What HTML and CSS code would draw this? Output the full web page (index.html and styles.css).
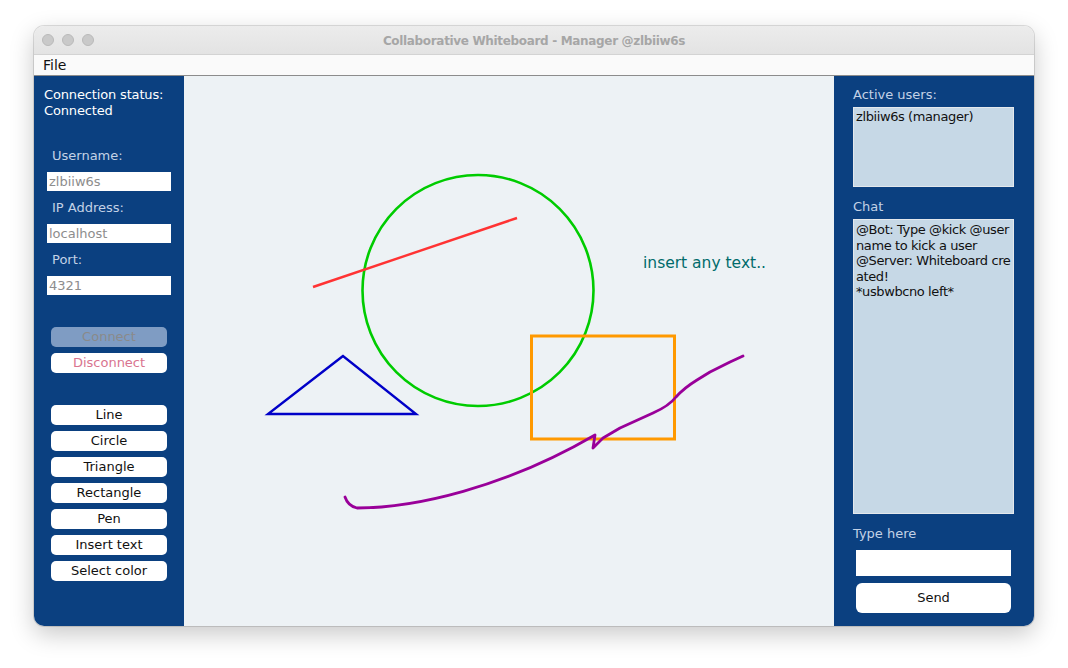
FILE: index.html
```html
<!DOCTYPE html>
<html>
<head>
<meta charset="utf-8">
<title>Collaborative Whiteboard</title>
<link rel="stylesheet" href="styles.css">
</head>
<body>
<div class="window">
  <div class="titlebar">
    <div class="lights"><span class="light"></span><span class="light"></span><span class="light"></span></div>
    <div class="title">Collaborative Whiteboard - Manager @zlbiiw6s</div>
  </div>
  <div class="menubar"><span class="menu-item">File</span></div>
  <div class="main">
    <aside class="left">
      <div class="status">Connection status:<br>Connected</div>
      <div class="field">
        <div class="label">Username:</div>
        <div class="input">zlbiiw6s</div>
      </div>
      <div class="field">
        <div class="label">IP Address:</div>
        <div class="input">localhost</div>
      </div>
      <div class="field">
        <div class="label">Port:</div>
        <div class="input">4321</div>
      </div>
      <div class="btn-group conn">
        <div class="btn disabled">Connect</div>
        <div class="btn danger">Disconnect</div>
      </div>
      <div class="btn-group tools">
        <div class="btn">Line</div>
        <div class="btn">Circle</div>
        <div class="btn">Triangle</div>
        <div class="btn">Rectangle</div>
        <div class="btn">Pen</div>
        <div class="btn">Insert text</div>
        <div class="btn">Select color</div>
      </div>
    </aside>
    <section class="canvas">
      <svg class="drawing" width="650" height="550" viewBox="0 0 650 550">
        <circle cx="294" cy="214.5" r="115.5" fill="none" stroke="#00cc00" stroke-width="2.6"/>
        <line x1="129" y1="211" x2="333" y2="142" stroke="#ff3333" stroke-width="2.4"/>
        <polygon points="159,280 84,338 232,338" fill="none" stroke="#0000c8" stroke-width="2.4"/>
        <rect x="347.5" y="260" width="143" height="103" fill="none" stroke="#ff9900" stroke-width="3"/>
        <path d="M161,421 Q164,430 173,432 C230,432 320,412 411,359 L409,372 L419,362 L436,352 L469,337 Q485,330 492,321 Q500,312 513,304 L526,296 L546,286 L559,280" fill="none" stroke="#990099" stroke-width="2.8" stroke-linejoin="round" stroke-linecap="round"/>
      </svg>
      <div class="canvas-text">insert any text..</div>
    </section>
    <aside class="right">
      <div class="rlabel">Active users:</div>
      <div class="box users">zlbiiw6s (manager)</div>
      <div class="rlabel">Chat</div>
      <div class="box chat">
        <div>@Bot: Type @kick @user</div>
        <div>name to kick a user</div>
        <div>@Server: Whiteboard cre</div>
        <div>ated!</div>
        <div>*usbwbcno left*</div>
      </div>
      <div class="rlabel">Type here</div>
      <div class="chat-input"></div>
      <div class="btn send">Send</div>
    </aside>
  </div>
</div>
</body>
</html>
```

FILE: styles.css
```css
* { box-sizing: border-box; }
html, body { margin: 0; padding: 0; }
body {
  background: #ffffff;
  font-family: "DejaVu Sans", "Liberation Sans", sans-serif;
  font-size: 13px;
  width: 1068px;
  height: 668px;
  overflow: hidden;
  padding: 26px 0 0 34px;
}
.window {
  width: 1000px;
  height: 600px;
  border-radius: 10px;
  overflow: hidden;
  box-shadow: 0 0 0 1px rgba(0,0,0,0.12), 0 8px 24px rgba(0,0,0,0.22);
  display: flex;
  flex-direction: column;
}
.titlebar {
  height: 29px;
  background: linear-gradient(#ececec, #e3e3e3);
  border-bottom: 1px solid #d3d3d3;
  position: relative;
  display: flex;
  align-items: center;
  justify-content: center;
}
.lights {
  position: absolute;
  left: 8px;
  top: 8px;
  display: flex;
  gap: 8px;
}
.light {
  width: 12px;
  height: 12px;
  border-radius: 50%;
  background: #c9c9c9;
  border: 1px solid #b9b9b9;
}
.title {
  font-weight: bold;
  font-size: 12px;
  letter-spacing: -0.33px;
  color: #a6a6a6;
  margin-top: 1px;
}
.menubar {
  height: 21px;
  background: #fafafa;
  border-bottom: 1px solid #8c8c8c;
  padding-left: 9px;
  display: flex;
  align-items: center;
}
.menu-item { font-size: 14px; color: #111; }
.main {
  flex: 1;
  display: flex;
  min-height: 0;
}
.left {
  width: 150px;
  background: #0b4080;
  padding-top: 11px;
  display: flex;
  flex-direction: column;
}
.status {
  color: #ffffff;
  line-height: 15.5px;
  padding-left: 10px;
  height: 31px;
  letter-spacing: -0.15px;
}
.field { display: flex; flex-direction: column; }
.status + .field { margin-top: 30px; }
.label {
  color: #c3d2e6;
  height: 15px;
  line-height: 15px;
  padding-left: 18px;
  margin-bottom: 9px;
}
.input {
  margin-left: 13px;
  width: 124px;
  height: 19px;
  background: #ffffff;
  color: #8d8d8d;
  line-height: 19px;
  padding-left: 2px;
  margin-bottom: 9px;
}
.btn-group {
  display: flex;
  flex-direction: column;
  gap: 6px;
  padding-left: 17px;
}
.conn { margin-top: 23px; }
.tools { margin-top: 32px; }
.btn {
  width: 116px;
  height: 20px;
  border-radius: 5px;
  background: #ffffff;
  color: #111;
  text-align: center;
  line-height: 20px;
}
.btn.disabled { background: #7f9cc3; color: #8a8a8a; }
.btn.danger { color: #d9748f; }
.canvas {
  width: 650px;
  background: #edf2f5;
  position: relative;
}
.drawing { display: block; }
.canvas-text {
  position: absolute;
  left: 459px;
  top: 178px;
  font-size: 15.5px;
  color: #006b6b;
}
.right {
  width: 200px;
  background: #0b4080;
  padding: 11px 0 0 19px;
  display: flex;
  flex-direction: column;
}
.rlabel {
  color: #c3d2e6;
  height: 15px;
  line-height: 15px;
}
.box {
  width: 161px;
  background: #c6d8e6;
  border: 1px solid #e4e8ec;
  color: #111;
  padding: 1px 0 0 2px;
  line-height: 15.5px;
  white-space: nowrap;
  overflow: hidden;
  letter-spacing: -0.4px;
}
.users { height: 80px; margin-top: 5px; margin-bottom: 12px; }
.chat { height: 295px; margin-top: 5px; margin-bottom: 12px; padding-top: 2px; }
.chat-input {
  margin-top: 9px;
  margin-left: 3px;
  width: 155px;
  height: 26px;
  background: #ffffff;
}
.btn.send {
  margin-top: 7px;
  margin-left: 3px;
  width: 155px;
  height: 30px;
  line-height: 30px;
  border-radius: 6px;
}
```
